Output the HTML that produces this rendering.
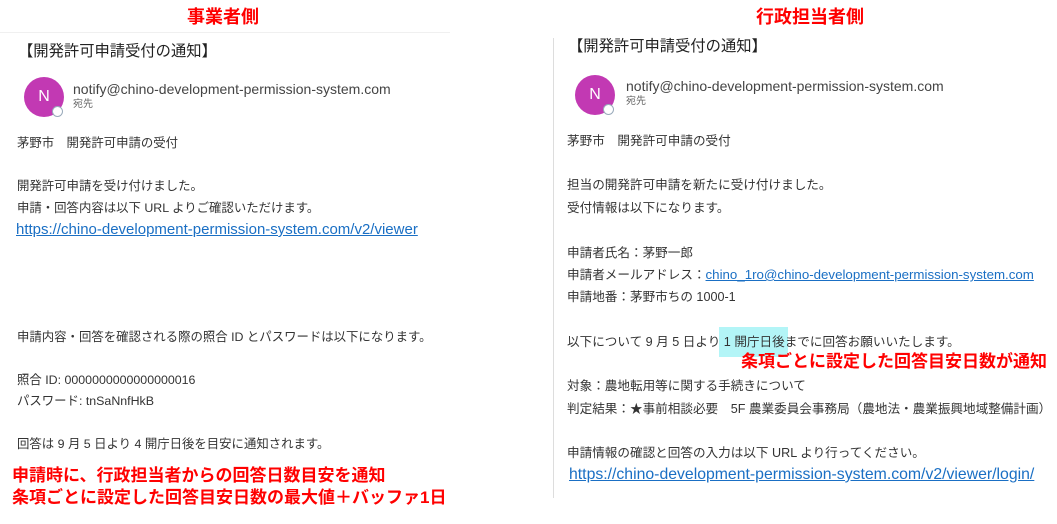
<!DOCTYPE html>
<html><head><meta charset="utf-8"><style>
body{margin:0;width:1057px;height:524px;background:#fff;position:relative;overflow:hidden;font-family:"Liberation Sans","Noto Sans CJK JP",sans-serif;color:#333}
div{position:absolute;white-space:nowrap}
.t{font-size:12.4px;line-height:16px}
.r .t{font-size:12.6px}
.red{color:#f00;font-weight:bold;font-size:17px;line-height:20px}
.hd{color:#f00;font-weight:bold;font-size:18px;line-height:22px;width:300px;text-align:center}
.ttl{font-size:15.3px;line-height:20px;color:#222}
.em{font-size:14px;line-height:16px;color:#444}
.to{font-size:10px;line-height:12px;color:#666}
.av{width:40px;height:40px;border-radius:50%;background:#c239b3;color:#fff;font-size:16px;line-height:40px;text-align:center}
.st{width:9px;height:9px;border-radius:50%;border:1.5px solid #9ab;background:#fff}
a{color:#1a6fc4;text-decoration:underline}
.lk{font-size:15px;line-height:18px}
</style></head><body>
<div style="left:0;top:32px;width:450px;height:1px;background:#f0f0f0"></div>
<div class="hd" style="left:73px;top:6px">事業者側</div>
<div class="ttl" style="left:18px;top:42px">【開発許可申請受付の通知】</div>
<div class="av" style="left:24px;top:77px">N</div>
<div class="st" style="left:52px;top:106px"></div>
<div class="em" style="left:73px;top:81px">notify@chino-development-permission-system.com</div>
<div class="to" style="left:73px;top:99px">宛先</div>
<div class="t" style="left:17px;top:135px">茅野市　開発許可申請の受付</div>
<div class="t" style="left:17px;top:178px">開発許可申請を受け付けました。</div>
<div class="t" style="left:17px;top:200px">申請・回答内容は以下 URL よりご確認いただけます。</div>
<div class="lk" style="left:16px;top:221px"><a>https://chino-development-permission-system.com/v2/viewer</a></div>
<div class="t" style="left:17px;top:329px">申請内容・回答を確認される際の照合 ID とパスワードは以下になります。</div>
<div class="t" style="left:17px;top:372px">照合 ID: 0000000000000000016</div>
<div class="t" style="left:17px;top:393px">パスワード: tnSaNnfHkB</div>
<div class="t" style="left:17px;top:436px">回答は 9 月 5 日より 4 開庁日後を目安に通知されます。</div>
<div class="red" style="left:12px;top:466px">申請時に、行政担当者からの回答日数目安を通知</div>
<div class="red" style="left:12px;top:488px">条項ごとに設定した回答目安日数の最大値＋バッファ1日</div>

<div class="r">
<div style="left:553px;top:38px;width:1px;height:460px;background:#ddd"></div>
<div class="hd" style="left:660px;top:6px">行政担当者側</div>
<div class="ttl" style="left:568px;top:37px">【開発許可申請受付の通知】</div>
<div class="av" style="left:575px;top:75px">N</div>
<div class="st" style="left:603px;top:104px"></div>
<div class="em" style="left:626px;top:78px">notify@chino-development-permission-system.com</div>
<div class="to" style="left:626px;top:96px">宛先</div>
<div class="t" style="left:567px;top:133px">茅野市　開発許可申請の受付</div>
<div class="t" style="left:567px;top:177px">担当の開発許可申請を新たに受け付けました。</div>
<div class="t" style="left:567px;top:200px">受付情報は以下になります。</div>
<div class="t" style="left:567px;top:245px">申請者氏名：茅野一郎</div>
<div class="t" style="left:567px;top:267px">申請者メールアドレス：<a style="font-size:13.3px">chino_1ro@chino-development-permission-system.com</a></div>
<div class="t" style="left:567px;top:289px">申請地番：茅野市ちの 1000-1</div>
<div style="left:719px;top:327px;width:69px;height:30px;background:#b3f5f7"></div>
<div class="t" style="left:567px;top:334px">以下について 9 月 5 日より 1 開庁日後までに回答お願いいたします。</div>
<div class="red" style="left:741px;top:352px">条項ごとに設定した回答目安日数が通知</div>
<div class="t" style="left:567px;top:378px">対象：農地転用等に関する手続きについて</div>
<div class="t" style="left:567px;top:401px">判定結果：★事前相談必要　5F 農業委員会事務局（農地法・農業振興地域整備計画）</div>
<div class="t" style="left:567px;top:445px">申請情報の確認と回答の入力は以下 URL より行ってください。</div>
<div class="lk" style="left:569px;top:466px;font-size:15.8px"><a>https://chino-development-permission-system.com/v2/viewer/login/</a></div>
</div>
</body></html>
